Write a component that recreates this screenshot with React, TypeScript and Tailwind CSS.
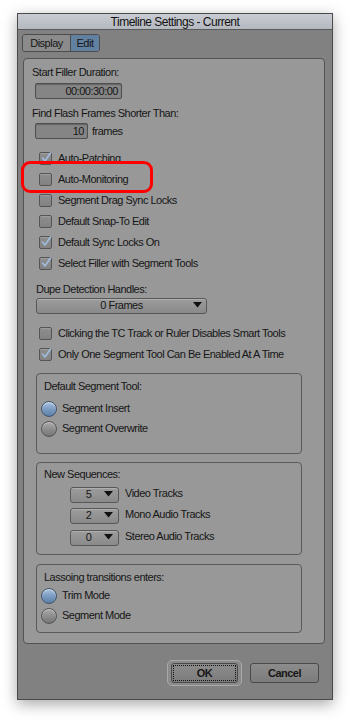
import React from "react";

const font = { fontFamily: '"Liberation Sans", Arial, sans-serif' };

function CheckBox({ checked }: { checked?: boolean }) {
  return (
    <span className="relative flex h-[13px] w-[13px] shrink-0 items-center justify-center rounded-[2px] border border-[#545454] bg-gradient-to-b from-[#8e8e8e] to-[#828282] shadow-[inset_0_1px_0_rgba(255,255,255,0.15)]">
      {checked && (
        <svg width="11" height="11" viewBox="0 0 11 11" className="absolute -top-[1px] left-[1px]">
          <path d="M1.5 6 L4 9 L9.5 1" fill="none" stroke="#9fbde0" strokeWidth="1.6" strokeLinecap="round" strokeLinejoin="round" />
        </svg>
      )}
    </span>
  );
}

function CheckRow({ label, checked }: { label: string; checked?: boolean }) {
  return (
    <div className="flex h-[21px] items-center whitespace-nowrap pl-[15px]">
      <CheckBox checked={checked} />
      <span className="ml-[6px]">{label}</span>
    </div>
  );
}

function Radio({ label, on }: { label: string; on?: boolean }) {
  return (
    <div className="flex h-[20px] items-center pl-[4px]">
      <span
        className={
          on
            ? "h-[16px] w-[16px] shrink-0 rounded-full border border-[#44546a] bg-gradient-to-b from-[#a9c3e0] via-[#7c9cc2] to-[#5c7ea6] shadow-[inset_0_1px_1px_rgba(255,255,255,0.5)]"
            : "h-[16px] w-[16px] shrink-0 rounded-full border border-[#555] bg-gradient-to-b from-[#ababab] via-[#8e8e8e] to-[#757575] shadow-[inset_0_1px_1px_rgba(255,255,255,0.35)]"
        }
      />
      <span className="ml-[5px]">{label}</span>
    </div>
  );
}

function Arrow() {
  return (
    <svg width="9" height="6" viewBox="0 0 9 6">
      <path d="M0 0 H9 L4.5 5.5 Z" fill="#111" />
    </svg>
  );
}

function TrackSelect({ value, label, mt }: { value: string; label: string; mt: string }) {
  return (
    <div className={`flex items-center pl-[33px] ${mt}`}>
      <div className="relative flex h-[16px] w-[49px] items-center justify-center rounded-[3px] border border-[#585858] bg-gradient-to-b from-[#9c9c9c] to-[#8a8a8a] pr-[12px] shadow-[inset_0_1px_0_rgba(255,255,255,0.2)]">
        {value}
        <span className="absolute right-[5px] top-[3px] flex">
          <Arrow />
        </span>
      </div>
      <span className="ml-[6px] -mt-[3px]">{label}</span>
    </div>
  );
}

export default function App() {
  return (
    <div className="min-h-[722px] w-[350px] bg-white pl-[17px] pt-[13px] text-[11px] tracking-[-0.5px] text-[#161616]" style={font}>
      <div className="flex h-[687px] w-[316px] flex-col border border-[#4a4a4a] bg-[#818181] shadow-[0_4px_14px_rgba(0,0,0,0.35)]">
        <div className="flex h-[16px] items-center justify-center border-b border-[#5a5a5a] bg-gradient-to-b from-[#c9ccd2] to-[#b4b8bf] text-[12px] text-[#111]">
          Timeline Settings - Current
        </div>

        <div className="ml-[4px] mt-[4px] flex h-[18px] w-[78px] overflow-hidden rounded-[3px] border border-[#4c4c4c]">
          <div className="flex w-[47px] items-center justify-center bg-[#8b8b8b]">Display</div>
          <div className="flex flex-1 items-center justify-center border-l border-[#4c4c4c] bg-[#62809f]">Edit</div>
        </div>

        <div className="relative ml-[5px] mt-[6px] flex h-[586px] w-[302px] flex-col rounded-[4px] border border-[#525252] bg-[#989898] pt-[6px]">
          <div className="flex h-[14px] items-center pl-[8px]">Start Filler Duration:</div>
          <div className="ml-[11px] mt-[4px] flex h-[16px] w-[87px] items-center justify-end rounded-[2px] border border-[#4f4f4f] bg-[#858585] pr-[3px] shadow-[inset_0_1px_1px_rgba(0,0,0,0.25)]">
            00:00:30:00
          </div>
          <div className="mt-[7px] flex h-[14px] items-center pl-[8px]">Find Flash Frames Shorter Than:</div>
          <div className="mt-[3px] flex items-center pl-[11px]">
            <div className="flex h-[16px] w-[53px] items-center justify-end rounded-[2px] border border-[#4f4f4f] bg-[#858585] pr-[3px] shadow-[inset_0_1px_1px_rgba(0,0,0,0.25)]">
              10
            </div>
            <span className="ml-[4px]">frames</span>
          </div>

          <div className="mt-[8px] flex flex-col">
            <CheckRow label="Auto-Patching" checked />
            <CheckRow label="Auto-Monitoring" />
            <CheckRow label="Segment Drag Sync Locks" />
            <CheckRow label="Default Snap-To Edit" />
            <CheckRow label="Default Sync Locks On" checked />
            <CheckRow label="Select Filler with Segment Tools" checked />
          </div>

          <div className="mt-[9px] flex h-[14px] items-center pl-[12px]">Dupe Detection Handles:</div>
          <div className="relative ml-[12px] mt-[1px] flex h-[16px] w-[171px] items-center justify-center rounded-[3px] border border-[#585858] bg-gradient-to-b from-[#9c9c9c] to-[#8a8a8a] shadow-[inset_0_1px_0_rgba(255,255,255,0.2)]">
            0 Frames
            <span className="absolute right-[4px] top-[3px] flex">
              <Arrow />
            </span>
          </div>

          <div className="mt-[9px] flex flex-col">
            <CheckRow label="Clicking the TC Track or Ruler Disables Smart Tools" />
            <CheckRow label="Only One Segment Tool Can Be Enabled At A Time" checked />
          </div>

          <div className="ml-[12px] mt-[8px] flex h-[81px] w-[266px] flex-col rounded-[4px] border border-[#5a5a5a] pt-[6px]">
            <div className="flex h-[14px] items-center pl-[7px]">Default Segment Tool:</div>
            <div className="mt-[5px] flex flex-col">
              <Radio label="Segment Insert" on />
              <Radio label="Segment Overwrite" />
            </div>
          </div>

          <div className="ml-[12px] mt-[8px] flex h-[93px] w-[266px] flex-col rounded-[4px] border border-[#5a5a5a] pt-[5px]">
            <div className="flex h-[14px] items-center pl-[7px]">New Sequences:</div>
            <TrackSelect value="5" label="Video Tracks" mt="mt-[5px]" />
            <TrackSelect value="2" label="Mono Audio Tracks" mt="mt-[5px]" />
            <TrackSelect value="0" label="Stereo Audio Tracks" mt="mt-[6px]" />
          </div>

          <div className="ml-[12px] mt-[9px] flex h-[69px] w-[266px] flex-col rounded-[4px] border border-[#5a5a5a] pt-[6px]">
            <div className="flex h-[14px] items-center pl-[7px]">Lassoing transitions enters:</div>
            <div className="mt-[1px] flex flex-col">
              <Radio label="Trim Mode" on />
              <Radio label="Segment Mode" />
            </div>
          </div>

          <div className="pointer-events-none absolute left-[-3px] top-[102px] h-[32px] w-[132px] rounded-[9px] border-[3px] border-[#ff0000]" />
        </div>

        <div className="mt-[16px] flex items-center justify-end gap-[8px] pr-[13px] font-bold">
          <div className="flex h-[26px] w-[75px] items-center justify-center rounded-[5px] border border-[#a9a9a9] bg-[#8a8a8a]">
            <div className="flex h-[20px] w-[67px] items-center justify-center rounded-[3px] border border-[#4a4a4a] bg-gradient-to-b from-[#8c8c8c] to-[#7c7c7c]">
              <span className="flex h-[16px] w-[63px] items-center justify-center border border-dotted border-[#111]">OK</span>
            </div>
          </div>
          <div className="flex h-[20px] w-[69px] items-center justify-center rounded-[3px] border border-[#4a4a4a] bg-gradient-to-b from-[#8c8c8c] to-[#7c7c7c]">
            Cancel
          </div>
        </div>
      </div>
    </div>
  );
}
